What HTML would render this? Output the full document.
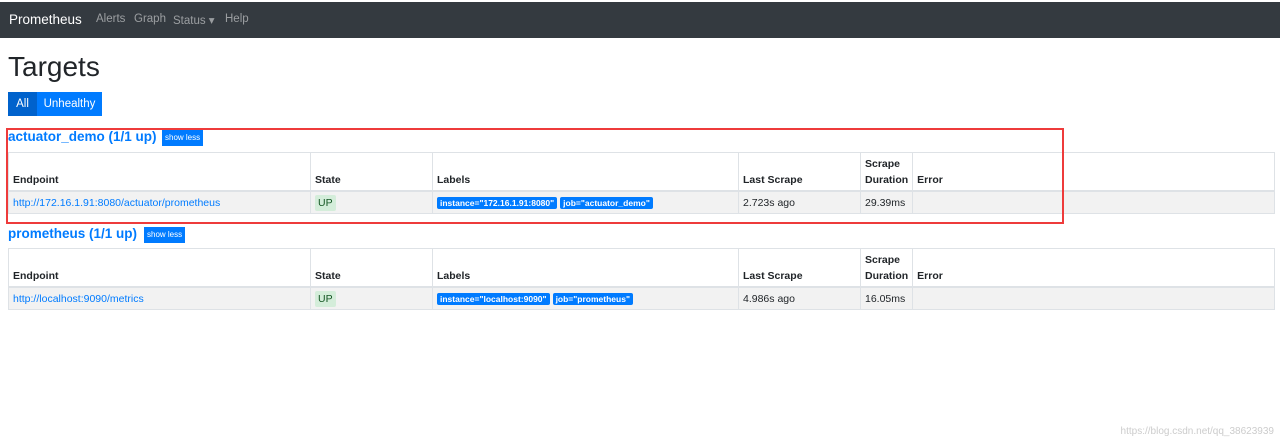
<!DOCTYPE html>
<html><head><meta charset="utf-8"><style>
*{box-sizing:border-box;margin:0;padding:0}
body{width:1280px;height:444px;background:#fff;font-family:"Liberation Sans",sans-serif;color:#212529;position:relative;overflow:hidden}
.nav{position:absolute;left:0;top:2px;width:1280px;height:36px;background:#343a40}
.nav span{position:absolute;top:11px;font-size:11.5px;color:rgba(255,255,255,.5)}
.brand{color:#fff!important;font-size:13.5px!important;top:10px!important}
h1{position:absolute;left:8px;top:51px;font-size:28px;font-weight:500;color:#212529}
.btn{position:absolute;top:92px;height:24px;background:#007bff;color:#fff;font-size:11.5px;line-height:25px;text-align:center}
.a{position:absolute;color:#007bff;font-weight:bold;font-size:13.5px}
.sl{position:absolute;background:#007bff;color:#fff;font-size:8px;height:16px;line-height:16px;padding:0 3px}
table{position:absolute;left:8px;width:1267px;border-collapse:collapse;font-size:10.5px}
td,th{border:1px solid #dee2e6;padding:0 4px;text-align:left;vertical-align:bottom}
th{height:38px;padding-bottom:2px;font-weight:bold;border-bottom:2px solid #dee2e6;line-height:16px}
tr.d td{height:23px;background:#f2f2f2;vertical-align:middle;padding-top:2px}
.l{color:#007bff}
.up{background:#d4edda;color:#155724;padding:2px 3px;border-radius:2px}
.b{background:#007bff;color:#fff;font-size:8.5px;font-weight:bold;padding:1px 3px;border-radius:2px;margin-right:3px}
.red{position:absolute;left:6px;top:128px;width:1058px;height:96px;border:2px solid #ee3b3b}
.wm{position:absolute;right:6px;top:426px;font-size:10px;color:#ccc}
</style></head><body>
<div class="nav"><span class="brand" style="left:9px">Prometheus</span><span style="left:96px">Alerts</span><span style="left:134px">Graph</span><span style="left:173px">Status ▾</span><span style="left:225px">Help</span></div>
<h1>Targets</h1>
<div class="btn" style="left:8px;width:29px;background:#0062cc">All</div>
<div class="btn" style="left:37px;width:65px">Unhealthy</div>
<div class="a" style="left:8px;top:129px">actuator_demo (1/1 up)</div>
<div class="sl" style="left:162px;top:130px">show less</div>
<table style="top:152px">
<tr><th style="width:302px">Endpoint</th><th style="width:122px">State</th><th style="width:306px">Labels</th><th style="width:122px">Last Scrape</th><th style="width:52px">Scrape Duration</th><th>Error</th></tr>
<tr class="d"><td class="l">http://172.16.1.91:8080/actuator/prometheus</td><td><span class="up">UP</span></td><td><span class="b">instance="172.16.1.91:8080"</span><span class="b">job="actuator_demo"</span></td><td>2.723s ago</td><td>29.39ms</td><td></td></tr>
</table>
<div class="a" style="left:8px;top:226px">prometheus (1/1 up)</div>
<div class="sl" style="left:144px;top:227px">show less</div>
<table style="top:248px">
<tr><th style="width:302px">Endpoint</th><th style="width:122px">State</th><th style="width:306px">Labels</th><th style="width:122px">Last Scrape</th><th style="width:52px">Scrape Duration</th><th>Error</th></tr>
<tr class="d"><td class="l">http://localhost:9090/metrics</td><td><span class="up">UP</span></td><td><span class="b">instance="localhost:9090"</span><span class="b">job="prometheus"</span></td><td>4.986s ago</td><td>16.05ms</td><td></td></tr>
</table>
<div class="red"></div>
<div class="wm">https://blog.csdn.net/qq_38623939</div>
</body></html>
